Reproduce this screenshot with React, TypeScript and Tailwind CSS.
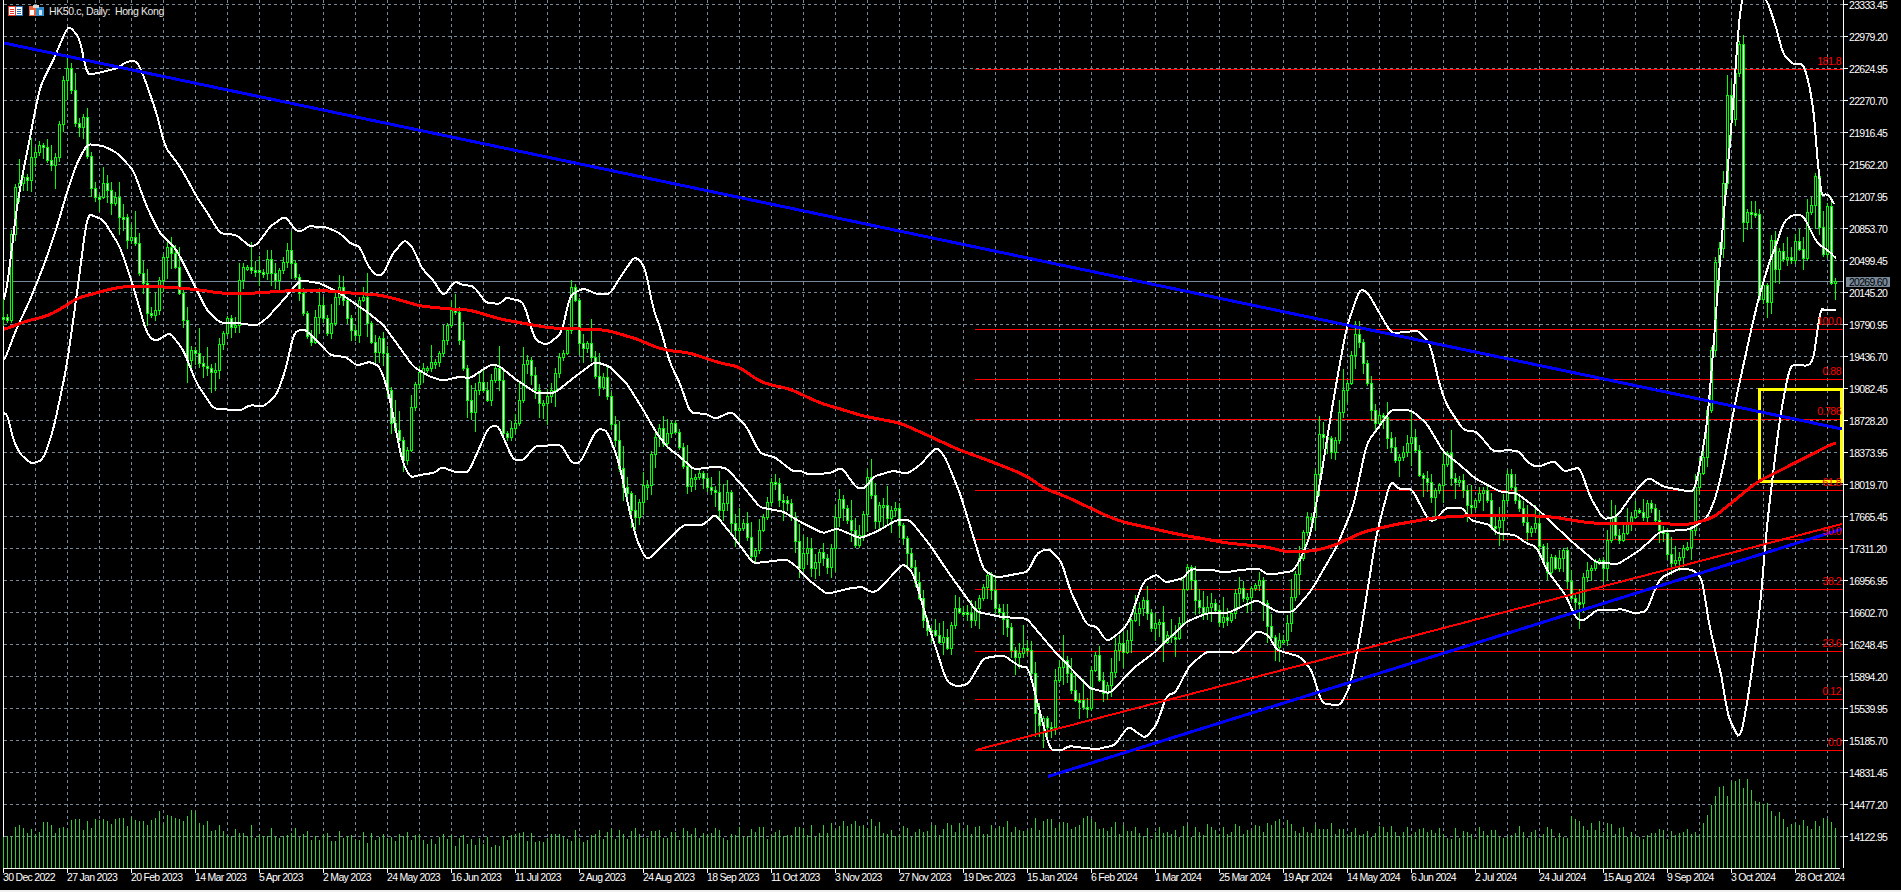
type P = [number, number]

// points were read off zoomed crops, so they carry the crop offset and its 3x scale
const crop = (ox: number, oy: number, from: number, to: number, flat: number[]): P[] => {
  const out: P[] = []
  for (let i = 0; i < flat.length; i += 2) {
    const x = ox + flat[i] / 3
    if (x >= from && x <= to) out.push([x, oy + flat[i + 1] / 3])
  }
  return out
}

const upperBand: P[] = [
  ...crop(0, 0, 0, 500, [12,915,30,800,40,700,60,560,75,490,100,360,120,260,160,180,205,75,240,115,260,225,300,218,350,205,380,185,410,182,430,225,470,340,495,440,540,500,560,535,590,590,620,635,660,700,710,705,750,740,770,735,810,680,855,648,890,695,915,690,920,678,980,682,1020,700,1050,730,1080,740,1105,800,1130,828,1150,825,1175,765,1215,718,1240,745,1265,805,1300,840,1330,890,1365,842,1385,855,1420,858,1460,910,1490,910]),
  ...crop(500, 220, 500, 1020, [0,255,15,232,70,245,105,360,140,375,185,340,210,225,250,205,290,222,330,222,365,165,405,108,435,140,460,270,480,320,510,430,540,490,570,578,620,582,645,597,695,575,740,620,780,700,825,712,880,755,905,750,915,762,990,760,1025,742,1070,805,1095,805,1120,770,1180,752,1220,762,1260,735,1310,680,1335,710,1380,820,1420,950,1450,1050,1490,1073,1560,1060]),
  ...crop(1000, 260, 1021, 1460, [85,935,110,880,145,865,185,905,210,990,260,1095,290,1100,320,1145,350,1125,385,1090,430,965,470,942,495,968,550,955,570,928,640,930,670,938,720,930,775,925,805,945,880,933,900,900,930,830,960,670,1000,420,1040,200,1080,85,1105,100,1150,180,1175,220,1255,212,1290,250,1320,380,1340,435,1380,495]),
  ...crop(1420, 260, 1461, 1700, [130,510,170,515,220,575,265,570,300,575,320,605,350,622,405,602,430,635,480,622,510,710,550,778,590,770,640,700,685,652,730,680,810,695,825,690]),
  [1707,427],[1715,327],[1720,260],[1725,200],[1730,143],[1737,53],[1739,10],[1743,-4],[1746,-8],[1760,-8],[1767,0],[1777,30],[1783,55],[1788,58],[1791,64],[1804,64],[1812,97],[1817,143],[1819,193],[1825,196],[1828,192],[1835,207],
]

const middleBand: P[] = [
  ...crop(0, 0, 0, 500, [12,1085,50,985,90,900,130,800,165,700,200,580,230,490,262,432,310,438,350,458,400,510,440,620,480,700,530,750,570,830,620,930,660,968,720,970,770,977,800,955,850,900,900,840,960,850,1020,880,1100,935,1150,975,1190,1030,1240,1100,1290,1130,1330,1142,1380,1130,1410,1135,1470,1095,1490,1095]),
  ...crop(500, 220, 500, 1020, [0,440,50,480,110,520,165,518,225,470,285,425,330,440,380,490,430,570,470,640,500,680,540,710,580,748,650,740,680,745,730,800,780,862,850,875,900,905,970,940,1010,925,1080,955,1130,935,1190,900,1230,900,1290,975,1340,1050,1430,1175,1500,1190,1560,1195]),
  ...crop(1000, 260, 1021, 1460, [80,1075,160,1170,270,1285,330,1300,400,1225,460,1180,560,1085,620,1060,680,1060,770,1020,830,1055,880,1055,935,990,1010,860,1060,740,1100,550,1175,448,1235,452,1280,490,1330,575,1380,615]),
  ...crop(1420, 260, 1461, 1770, [165,655,240,695,290,700,350,745,450,840,530,908,595,912,660,870,720,815,810,808,860,775,885,720,910,620,945,430,1000,180,1020,100,1050,0]),
  [1777,243],[1783,223],[1792,215],[1803,215],[1817,243],[1830,252],[1836,259],
]

const lowerBand: P[] = [
  ...crop(0, 0, 0, 500, [12,1240,25,1240,35,1310,60,1362,95,1392,130,1378,160,1290,200,1100,235,850,262,640,310,660,360,740,400,860,440,1000,465,1025,510,998,550,1050,590,1150,640,1225,720,1232,750,1215,790,1220,830,1185,860,1100,880,1000,910,985,950,1020,990,1065,1040,1072,1070,1097,1110,1085,1140,1100,1165,1175,1190,1300,1205,1380,1230,1433,1260,1425,1305,1418,1325,1400,1360,1415,1405,1418,1440,1340,1465,1282,1495,1275]),
  ...crop(500, 220, 500, 1020, [0,630,40,720,70,722,105,678,185,675,215,730,240,730,290,627,320,630,355,720,390,880,410,960,440,1022,480,985,550,915,610,915,645,882,700,950,760,1030,860,1018,890,1040,920,1075,980,1122,1050,1105,1090,1100,1105,1115,1130,1115,1210,1030,1240,1060,1290,1230,1340,1385,1370,1400,1405,1392,1450,1315,1510,1305,1560,1340]),
  ...crop(1000, 260, 1021, 1460, [85,1220,105,1300,150,1470,185,1472,205,1458,290,1468,345,1455,385,1398,435,1435,470,1395,500,1305,525,1300,570,1215,620,1175,710,1178,770,1112,805,1125,830,1170,900,1190,935,1230,965,1330,1020,1337,1050,1280,1080,1130,1130,820,1172,660,1200,690,1235,685,1285,780,1300,785,1340,742,1380,745]),
  ...crop(1420, 260, 1461, 1840, [130,742,150,780,210,795,230,820,285,825,320,850,350,860,380,930,410,970,440,1010,460,1060,480,1085,500,1075,530,1050,610,1048,640,1060,680,1055,700,1000,720,955,780,925,820,930,850,960,860,1060,885,1170,910,1270,920,1360,960,1442,985,1310,1020,1050,1040,800,1080,470,1110,315,1170,317,1187,280,1197,145,1215,150,1248,150]),
]

const movingAvg: P[] = [
  [4,330],[20,323],[50,315],[67,305],[77,298],[100,292],[110,289],[130,286],[165,287],[180,288],[200,290],[220,293],[240,294],[270,292],[300,290],[330,291],[350,293],[380,295],[400,300],[420,306],[450,309],[470,310],[500,319],
  [533,325],[550,328],[580,329],[605,330],[610,331],[640,340],[650,345],[665,350],[690,353],[720,363],[740,367],[757,380],[767,384],[790,389],[820,403],[847,411],[863,416],[900,423],[927,435],[957,449],[987,460],[1000,465],[1020,473],
  [1030,478],[1043,488],[1067,497],[1107,516],[1123,522],[1177,534],[1227,543],[1267,547],[1287,552],[1313,551],[1333,546],[1363,532],[1393,525],[1433,518],[1460,516],
  [1520,515],[1553,517],[1590,523],[1627,524],[1653,523],[1687,525],[1713,518],[1757,482],[1787,467],[1820,450],[1836,442],
]

const closes: P[] = [
  ...crop(0, 0, 0, 500, [12,950,22,960,34,700,46,560,58,550,70,530,82,540,94,470,106,455,118,435,130,440,142,480,154,495,166,470,178,370,190,240,202,205,214,270,226,370,238,380,250,350,262,470,274,565,286,590,298,590,310,550,322,570,334,610,346,590,358,650,370,650,382,720,394,710,406,730,418,820,430,850,442,940,454,945,466,930,478,840,490,770,502,740,514,760,526,800,538,880,550,960,562,1080,574,1050,586,1060,598,1090,610,1098,622,1105,634,1115,646,1110,658,1030,670,1000,682,955,694,980,706,975,718,840,730,800,742,800,754,810,766,810,778,815,790,820,802,778,814,820,826,840,838,810,850,785,862,750,874,790,886,830,898,880,910,940,922,1010,934,1025,946,950,958,915,970,955,982,998,994,970,1006,890,1018,860,1030,900,1042,955,1054,990,1066,1005,1078,900,1090,890,1102,970,1114,1025,1126,1055,1138,1015,1150,1060,1162,1170,1174,1270,1186,1290,1198,1320,1210,1380,1222,1350,1234,1220,1246,1150,1258,1115,1270,1105,1282,1105,1294,1087,1306,1087,1318,1060,1330,1020,1342,975,1354,930,1366,935,1378,1020,1390,1105,1402,1200,1414,1235,1426,1170,1438,1145,1450,1170,1462,1200,1474,1140,1486,1105,1498,1140]),
  ...crop(500, 220, 500, 1005, [10,640,22,650,34,625,46,610,58,540,70,430,82,420,106,510,118,550,130,548,154,510,166,460,178,410,190,400,202,330,214,200,226,240,238,370,250,385,262,370,274,410,286,470,298,500,310,470,322,530,334,612,346,660,358,745,370,800,382,820,394,870,406,890,418,845,430,795,442,795,454,700,466,650,478,625,490,670,514,610,526,635,538,680,550,740,562,800,574,775,586,770,598,760,610,775,622,800,634,810,646,815,658,870,670,850,682,815,694,910,706,930,718,925,730,910,742,950,754,1010,766,990,778,930,790,890,802,845,814,785,826,790,838,840,850,840,862,850,874,890,886,965,898,1045,910,1000,922,985,934,1045,946,1025,958,995,970,1015,982,1040,994,985,1006,890,1018,838,1030,865,1042,900,1054,930,1066,975,1078,945,1090,880,1102,770,1114,825,1126,905,1138,855,1150,855,1162,895,1174,870,1186,865,1198,915,1210,955,1222,1000,1246,1085,1258,1135,1270,1200,1282,1230,1294,1230,1306,1245,1318,1265,1330,1250,1342,1285,1354,1215,1366,1165,1378,1175,1390,1175,1402,1180,1414,1200,1426,1165,1450,1100,1462,1065,1474,1110,1486,1165,1498,1175]),
  ...crop(1000, 260, 1006, 1423, [22,1100,34,1170,46,1190,58,1180,70,1165,82,1170,94,1240,106,1360,118,1395,130,1375,142,1400,154,1400,166,1260,178,1220,190,1200,202,1240,214,1290,226,1320,238,1320,250,1340,262,1345,274,1230,286,1185,298,1260,310,1300,322,1275,334,1235,346,1170,358,1150,370,1175,382,1140,394,1080,406,1060,418,1045,430,1020,442,1060,454,1105,466,1090,478,1085,490,1145,502,1125,514,1130,526,1135,538,1090,550,985,562,920,574,960,586,1020,598,1040,610,1060,622,1040,634,1030,646,1050,658,1085,670,1070,682,1080,694,1060,706,1000,718,985,730,1015,742,1010,754,985,766,975,778,960,790,1030,802,1100,814,1130,826,1160,838,1140,850,1140,862,1090,874,1010,886,940,898,895,910,815,922,770,934,770,946,640,958,520,970,530,982,535,994,575,1006,540,1018,455,1030,390,1042,370,1054,285,1066,220,1078,245,1090,310,1102,370,1114,450,1126,490,1138,465,1150,470,1162,535,1174,560,1186,600,1198,590,1210,575,1222,550,1234,530,1246,570,1258,645,1270,670]),
  ...crop(1420, 260, 1424, 1712, [10,675,22,665,34,710,46,690,58,675,70,610,82,580,94,655,106,665,118,660,130,690,142,735,154,740,166,720,178,700,190,690,202,720,214,800,226,800,238,780,250,720,262,640,274,680,286,720,298,745,310,785,322,815,334,805,346,790,358,860,370,905,382,935,394,890,406,925,418,895,430,870,442,965,454,1015,466,1025,478,1030,490,950,502,930,514,925,526,905,538,900,550,925,562,840,574,770,586,825,598,840,610,820,622,790,634,770,646,750,658,755,670,770,682,730,694,745,706,780,718,810,730,820,742,882,754,910,766,900,778,890,790,865,802,860,814,810,826,680,838,640,850,590,862,450,874,270]),
  [1715,263],[1719,253],[1723,190],[1727,93],[1731,123],[1735,76],[1739,30],[1743,223],[1747,212],[1751,213],[1755,207],[1759,300],[1763,283],[1767,307],[1771,238],[1775,270],[1779,250],[1783,259],[1787,257],[1791,262],[1795,240],[1799,248],[1803,262],[1807,212],[1811,208],[1815,172],[1819,225],[1823,258],[1827,200],[1831,283],[1835,281],
]

// small seeded generator so the wicks and volumes stay the same on every load
const makeRng = (seed: number) => () => {
  seed = (seed * 1664525 + 1013904223) >>> 0
  return seed / 4294967296
}

const interp = (pts: P[], x: number) => {
  if (x <= pts[0][0]) return pts[0][1]
  for (let i = 1; i < pts.length; i++) {
    if (x <= pts[i][0]) {
      const [x0, y0] = pts[i - 1]
      const [x1, y1] = pts[i]
      return y0 + ((y1 - y0) * (x - x0)) / (x1 - x0 || 1)
    }
  }
  return pts[pts.length - 1][1]
}

// rounds the hand-read corners off, the real lines are averages and have none
const smooth = (pts: P[], radius: number): P[] => {
  const start = pts[0][0]
  const end = pts[pts.length - 1][0]
  const out: P[] = []
  for (let x = start; x <= end; x += 2) {
    let sum = 0
    let n = 0
    for (let d = -radius; d <= radius; d += 1) {
      sum += interp(pts, Math.min(end, Math.max(start, x + d)))
      n++
    }
    out.push([x, sum / n])
  }
  return out
}

const volumeTops: P[] = [[3,831],[197,814],[215,826],[260,832],[394,836],[455,838],[497,840],[560,836],[640,833],[800,832],[868,824],[900,832],[1055,822],[1097,821],[1130,832],[1280,825],[1400,832],[1560,830],[1568,830],[1572,802],[1576,824],[1590,824],[1640,834],[1700,828],[1720,790],[1745,783],[1760,800],[1775,813],[1794,826],[1815,823],[1830,815],[1835,823]]

const candles = (() => {
  const rng = makeRng(4217)
  const out = []
  let prev = interp(closes, 3)
  for (let i = 0; i < 459; i++) {
    const x = 3 + 4 * i
    const cur = interp(closes, x + 0.3)
    const top = Math.round(Math.min(prev, cur))
    let bottom = Math.round(Math.max(prev, cur))
    if (bottom - top < 2) bottom = top + 2
    out.push({
      x,
      top,
      bottom,
      up: cur < prev,
      high: Math.round(top - 2 - rng() * rng() * 26),
      low: Math.round(bottom + 2 + rng() * rng() * 26),
      vol: Math.round(interp(volumeTops, x) + rng() * 14 - 6),
    })
    prev = cur
  }
  return out
})()

const toPoints = (pts: P[]) => pts.map(([x, y]) => `${x.toFixed(1)},${y.toFixed(1)}`).join(' ')

const prices = ['23333.45','22979.20','22624.95','22270.70','21916.45','21562.20','21207.95','20853.70','20499.45','20145.20','19790.95','19436.70','19082.45','18728.20','18373.95','18019.70','17665.45','17311.20','16956.95','16602.70','16248.45','15894.20','15539.95','15185.70','14831.45','14477.20','14122.95']

const dates = ['30 Dec 2022','27 Jan 2023','20 Feb 2023','14 Mar 2023','5 Apr 2023','2 May 2023','24 May 2023','16 Jun 2023','11 Jul 2023','2 Aug 2023','24 Aug 2023','18 Sep 2023','11 Oct 2023','3 Nov 2023','27 Nov 2023','19 Dec 2023','15 Jan 2024','6 Feb 2024','1 Mar 2024','25 Mar 2024','19 Apr 2024','14 May 2024','6 Jun 2024','2 Jul 2024','24 Jul 2024','15 Aug 2024','9 Sep 2024','3 Oct 2024','28 Oct 2024']

const fibs = [
  { y: 69.5, label: '181.8', ly: 65 },
  { y: 329.5, label: '100.0', ly: 325 },
  { y: 379.5, label: '0.88', ly: 375 },
  { y: 419.5, label: '0.786', ly: 415 },
  { y: 490.5, label: '61.8', ly: 486 },
  { y: 539.5, label: '50.0', ly: 535 },
  { y: 589.5, label: '38.2', ly: 585 },
  { y: 651.5, label: '23.6', ly: 647 },
  { y: 699.5, label: '0.12', ly: 695 },
  { y: 750.5, label: '0.0', ly: 746 },
]

function ToolbarIcons() {
  return (
    <svg width="37" height="12" viewBox="0 0 37 12" shapeRendering="crispEdges">
      <rect x="0.5" y="1.5" width="14" height="9" fill="#fff" stroke="#1f6fb5" />
      <rect x="0.5" y="1.5" width="7" height="9" fill="#fff" stroke="#e0392b" />
      <path d="M2 4h4M2 6h4M2 8h4" stroke="#e0392b" />
      <path d="M9 4h4M9 6h4M9 8h4" stroke="#1f6fb5" />
      <rect x="21" y="1" width="7" height="10" fill="#e8603c" />
      <rect x="22" y="5" width="4" height="5" fill="#fff" />
      <rect x="28" y="2" width="8" height="9" fill="#2f8fd0" />
      <rect x="31" y="5" width="3" height="5" fill="#cfe6f7" />
      <rect x="25" y="0" width="6" height="3" fill="#d8d8d8" />
    </svg>
  )
}

function Chart() {
  const gridX = Array.from({ length: 57 }, (_, i) => 35.5 + 32 * i)
  const gridY = prices.map((_, i) => 4.5 + 32 * i)

  return (
    <svg width="1843" height="868" viewBox="0 0 1843 868" className="block shrink-0" shapeRendering="crispEdges">
      {gridX.map((x) => (
        <line key={x} x1={x} x2={x} y1={0} y2={868} stroke="#778899" strokeDasharray="3 3" />
      ))}
      {gridY.map((y) => (
        <line key={y} x1={4} x2={1843} y1={y} y2={y} stroke="#778899" strokeDasharray="3 3" />
      ))}
      <line x1={3.5} x2={3.5} y1={0} y2={868} stroke="#fff" />
      <line x1={4} x2={1843} y1={281.5} y2={281.5} stroke="#778899" />

      {candles.map((c) => (
        <line key={c.x} x1={c.x + 0.5} x2={c.x + 0.5} y1={c.vol} y2={868} stroke="#32cd32" />
      ))}

      {fibs.map((f) => (
        <line key={f.label} x1={975} x2={1843} y1={f.y} y2={f.y} stroke="#ff0000" />
      ))}
      <rect x="1759.5" y="389.5" width="82" height="92" fill="none" stroke="#ffff00" strokeWidth="3" />

      {candles.map((c) => (
        <g key={c.x}>
          <line x1={c.x + 0.5} x2={c.x + 0.5} y1={c.high} y2={c.low} stroke="#00ff00" />
          <rect
            x={c.x - 0.5}
            y={c.top + 0.5}
            width={2}
            height={c.bottom - c.top}
            fill={c.up ? '#000' : '#fff'}
            stroke="#00ff00"
          />
        </g>
      ))}

      <polyline points={toPoints(smooth(upperBand, 3))} fill="none" stroke="#fff" strokeWidth="2" />
      <polyline points={toPoints(smooth(middleBand, 3))} fill="none" stroke="#fff" strokeWidth="2" />
      <polyline points={toPoints(smooth(lowerBand, 3))} fill="none" stroke="#fff" strokeWidth="2" />
      <polyline points={toPoints(smooth(movingAvg, 8))} fill="none" stroke="#ff0000" strokeWidth="3" />

      <line x1={4} y1={43} x2={1842} y2={429} stroke="#0000ff" strokeWidth="3" />
      <line x1={976} y1={750} x2={1842} y2={524} stroke="#ff0000" strokeWidth="2" />
      <line x1={1048} y1={776.5} x2={1842} y2={529} stroke="#0000ff" strokeWidth="3" />

      {fibs.map((f) => (
        <text key={f.label} x={1841} y={f.ly} textAnchor="end" fill="#ff0000" fontSize="10.5" letterSpacing="-0.5" shapeRendering="auto">
          {f.label}
        </text>
      ))}
    </svg>
  )
}

export default function App() {
  return (
    <div className="relative h-[892px] w-[1901px] overflow-hidden bg-black font-['Liberation_Sans',Arial,sans-serif] text-[10.5px] leading-[10px] tracking-[-0.7px] text-white">
      <div className="flex h-[868px]">
        <Chart />
        {/* price scale */}
        <div className="flex h-[868px] flex-1 flex-col overflow-hidden border-l border-white">
          <div className="-mt-[11.5px] flex flex-col">
            {prices.map((p) => (
              <div key={p} className="flex h-[32px] shrink-0 items-center">
                <div className="h-px w-[4px] bg-white" />
                <span className="ml-[1px] leading-[8px]">{p}</span>
              </div>
            ))}
          </div>
        </div>
      </div>

      {/* time scale */}
      <div className="flex h-[22px] pl-[3px]">
        {dates.map((d, i) => (
          <div key={d} className={i === dates.length - 1 ? 'w-[45px] shrink-0 border-t border-white' : 'w-[64px] shrink-0 border-t border-white'}>
            <div className="h-[4px] w-px bg-white" />
            <div className="-mt-px whitespace-nowrap">{d}</div>
          </div>
        ))}
      </div>
      <div className="h-[2px] bg-[#f0f0f0]" />

      {/* overlays on the chart */}
      <div className="absolute left-[8px] top-[5px] flex items-center gap-[4px]">
        <ToolbarIcons />
        <span className="whitespace-pre text-[10.5px] tracking-[-0.4px] text-[#e8e8e8]">HK50.c, Daily:  Hong Kong</span>
      </div>
      <div className="absolute left-[1846px] top-[277px] flex h-[10px] w-[44px] items-center justify-center bg-[#778899] text-black">
        20269.60
      </div>
    </div>
  )
}
